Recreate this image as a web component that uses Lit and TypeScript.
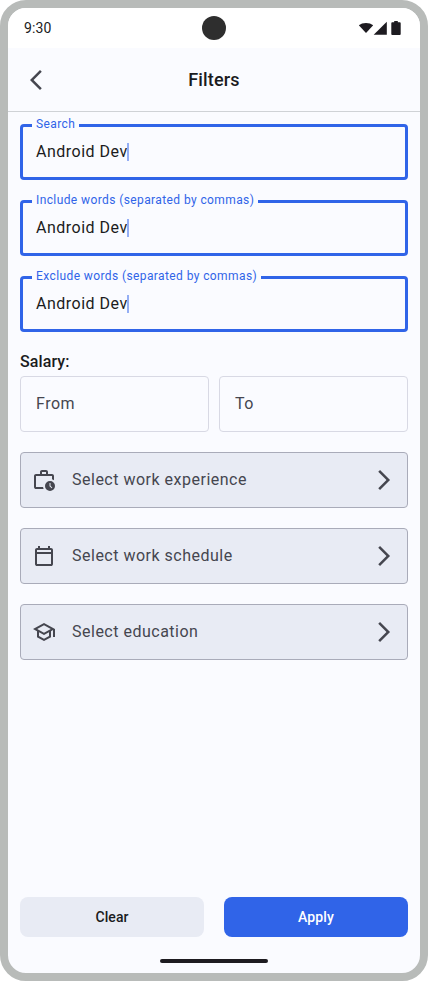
import { LitElement, html, css, svg, nothing } from "lit";
import { customElement, property } from "lit/decorators.js";

const ICONS = {
  back: "M10 22 0 12 10 2l1.775 1.775L3.55 12l8.225 8.225z",
  forward: "M8.025 22 6.25 20.225 14.475 12 6.25 3.775 8.025 2l10 10z",
  work: "M4 21q-.825 0-1.412-.587T2 19V8q0-.825.588-1.412T4 6h4V4q0-.825.588-1.412T10 2h4q.825 0 1.413.588T16 4v2h4q.825 0 1.413.588T22 8v4.275q-.45-.325-.95-.562T20 11.3V8H4v11h7.075q.075.525.225 1.025t.375.975zm6-15h4V4h-4zm8 17q-2.075 0-3.537-1.463T13 18t1.463-3.537T18 13t3.538 1.463T23 18t-1.463 3.538T18 23m1.65-2.65.7-.7-1.85-1.85V15h-1v3.2z",
  calendar: "M5 22q-.825 0-1.412-.587T3 20V6q0-.825.588-1.412T5 4h1V2h2v2h8V2h2v2h1q.825 0 1.413.588T21 6v14q0 .825-.587 1.413T19 22zm0-2h14V10H5zM5 8h14V6H5z",
  school: "M12 3 1 9l4 2.18v6L12 21l7-3.82v-6l2-1.09V17h2V9L12 3zm6.82 6L12 12.72 5.18 9 12 5.28 18.82 9zM17 15.99l-5 2.73-5-2.73v-3.72L12 15l5-2.73v3.72z",
};
type IconName = keyof typeof ICONS;

@customElement("app-icon")
export class AppIcon extends LitElement {
  @property() name: IconName = "back";
  static styles = css`
    :host { display: block; width: 24px; height: 24px; flex: none; }
    svg { display: block; }
  `;
  render() {
    return html`<svg width="24" height="24" viewBox="0 0 24 24" fill="currentColor">
      ${svg`<path fill-rule="evenodd" d=${ICONS[this.name]}></path>`}
    </svg>`;
  }
}

@customElement("text-field")
export class TextField extends LitElement {
  @property() label = "";
  @property() value = "";
  @property() placeholder = "";
  static styles = css`
    :host { display: block; position: relative; height: 56px; flex: 1 1 auto; min-width: 0; }
    fieldset {
      position: absolute; inset: 0; box-sizing: border-box; margin: 0; padding: 0;
      border: 1px solid #d8d9e4; border-radius: 4px; min-width: 0;
    }
    .active { top: -7px; border: 3px solid #3064e8; padding-left: 9px; }
    legend {
      padding: 0 4px; height: 17px; font-size: 12px; line-height: 14px;
      letter-spacing: 0.4px; color: #3064e8; white-space: nowrap;
    }
    .text {
      display: flex; align-items: center; height: 56px; padding-left: 16px;
      font-size: 16px; line-height: 24px; letter-spacing: 0.5px; color: #1a1b21;
    }
    .hint { height: 55px; color: #45464f; }
    .caret { width: 2px; height: 18px; margin-left: -0.7px; background: #94aef4; }
  `;
  render() {
    return this.label
      ? html`<fieldset class="active"><legend>${this.label}</legend></fieldset>
          <div class="text">${this.value}<span class="caret"></span></div>`
      : html`<fieldset></fieldset><div class="text hint">${this.placeholder || nothing}</div>`;
  }
}

@customElement("select-row")
export class SelectRow extends LitElement {
  @property() icon: IconName = "work";
  @property() label = "";
  static styles = css`
    :host {
      display: flex; align-items: center; box-sizing: border-box; height: 56px;
      padding: 0 11px; border: 1px solid #a9abb9; border-radius: 4px;
      background: #e8ebf4; color: #45464f;
    }
    .label { flex: 1; padding: 0 0 1px 16px; font-size: 16px; line-height: 24px; letter-spacing: 0.5px; }
  `;
  render() {
    return html`<app-icon name=${this.icon}></app-icon>
      <span class="label">${this.label}</span>
      <app-icon name="forward"></app-icon>`;
  }
}

@customElement("app-root")
export class AppRoot extends LitElement {
  static styles = css`
    :host {
      display: flex; flex-direction: column; box-sizing: border-box;
      width: 428px; height: 981px; border: 8px solid #b8bbb9; border-radius: 26px;
      overflow: hidden; background: #fafbff; color: #1a1b21;
      font-family: Roboto, "Liberation Sans", sans-serif;
    }
    .status {
      display: grid; grid-template-columns: 1fr 24px 1fr; align-items: center;
      height: 40px; flex: none; padding: 0 16px; background: #fff;
    }
    .time { font-size: 14px; line-height: 20px; letter-spacing: 0.14px; }
    .camera { width: 24px; height: 24px; border-radius: 50%; background: #2e2e2e; }
    .signals { justify-self: end; display: block; }
    header {
      display: grid; grid-template-columns: 24px 1fr 24px; align-items: center;
      height: 64px; flex: none; box-sizing: border-box; padding: 0 22px;
      border-bottom: 1px solid #cfd2d6;
    }
    header app-icon { color: #45464f; }
    h1 { margin: 0; text-align: center; font-size: 18px; line-height: 24px; font-weight: 500; letter-spacing: 0.15px; }
    main { flex: 1; display: flex; flex-direction: column; padding: 12px 12px 0; }
    .fields, .selects { display: flex; flex-direction: column; gap: 20px; }
    .salary { margin: 20px 0 4px; font-size: 16px; line-height: 20px; font-weight: 500; letter-spacing: 0.1px; }
    .range { display: grid; grid-template-columns: 1fr 1fr; gap: 10px; margin-bottom: 20px; }
    footer { display: grid; grid-template-columns: 1fr 1fr; gap: 20px; padding: 0 12px; }
    button {
      height: 40px; padding: 0; border: 0; border-radius: 8px; background: #e8ebf4; color: #1a1b21;
      font: 500 14px/20px Roboto, "Liberation Sans", sans-serif; letter-spacing: 0.1px;
    }
    .primary { background: #3064e8; color: #fff; }
    .home { width: 108px; height: 4px; margin: 22px auto 10px; border-radius: 2px; background: #1d1b20; }
  `;
  render() {
    return html`
      <div class="status">
        <span class="time">9:30</span>
        <span class="camera"></span>
        <svg class="signals" width="46" height="16" viewBox="0 0 46 16" fill="#1d1b20">
          <path d="M8 13 .8 5.2Q3.7 2.9 8 2.9T15.2 5.2z"></path>
          <path d="M15.7 14.8 28.8 1.7v13.1z"></path>
          <path d="M34.2 2.3h2V1h3.6v1.3h2q.9 0 .9.9v10.9q0 .9-.9.9h-7.6q-.9 0-.9-.9v-10.9q0-.9.9-.9z"></path>
        </svg>
      </div>
      <header><app-icon name="back"></app-icon><h1>Filters</h1></header>
      <main>
        <div class="fields">
          <text-field label="Search" value="Android Dev"></text-field>
          <text-field label="Include words (separated by commas)" value="Android Dev"></text-field>
          <text-field label="Exclude words (separated by commas)" value="Android Dev"></text-field>
        </div>
        <div class="salary">Salary:</div>
        <div class="range">
          <text-field placeholder="From"></text-field>
          <text-field placeholder="To"></text-field>
        </div>
        <div class="selects">
          <select-row icon="work" label="Select work experience"></select-row>
          <select-row icon="calendar" label="Select work schedule"></select-row>
          <select-row icon="school" label="Select education"></select-row>
        </div>
      </main>
      <footer>
        <button>Clear</button>
        <button class="primary">Apply</button>
      </footer>
      <div class="home"></div>
    `;
  }
}
